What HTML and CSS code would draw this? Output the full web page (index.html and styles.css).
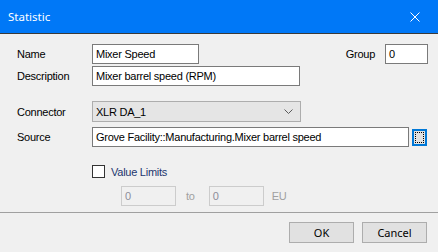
FILE: index.html
```html
<!DOCTYPE html>
<html>
<head>
<meta charset="utf-8">
<link rel="stylesheet" href="styles.css">
</head>
<body>
<div class="dialog">
  <div class="titlebar">
    <span class="title">Statistic</span>
    <svg class="close" width="10" height="10" viewBox="0 0 10 10"><path d="M0.5 0.5 L9.5 9.5 M9.5 0.5 L0.5 9.5" stroke="#fff" stroke-width="1" fill="none"/></svg>
  </div>
  <div class="content">
    <div class="row row-name">
      <span class="lbl">Name</span>
      <div class="field w-name">Mixer Speed</div>
      <span class="spacer"></span>
      <span class="lbl-group">Group</span>
      <div class="field w-group">0</div>
    </div>
    <div class="row row-desc">
      <span class="lbl">Description</span>
      <div class="field w-desc">Mixer barrel speed (RPM)</div>
    </div>
    <div class="row row-conn">
      <span class="lbl">Connector</span>
      <div class="select">
        <span>XLR DA_1</span>
        <svg class="chev" width="9" height="5" viewBox="0 0 9 5"><path d="M0.5 0.5 L4.5 4.5 L8.5 0.5" stroke="#5a5a5a" stroke-width="1" fill="none"/></svg>
      </div>
    </div>
    <div class="row row-src">
      <span class="lbl">Source</span>
      <div class="field w-src">Grove Facility::Manufacturing.Mixer barrel speed</div>
      <div class="browse"><span class="focus"></span></div>
    </div>
    <div class="row row-check">
      <span class="check"></span>
      <span class="check-lbl">Value Limits</span>
    </div>
    <div class="row row-limits">
      <div class="field disabled w-lim">0</div>
      <span class="dis-text to">to</span>
      <div class="field disabled w-lim">0</div>
      <span class="dis-text eu">EU</span>
    </div>
  </div>
  <div class="sep"></div>
  <div class="buttons">
    <div class="btn">OK</div>
    <div class="btn">Cancel</div>
  </div>
</div>
</body>
</html>
```
FILE: styles.css
```css
* { box-sizing: border-box; }
html, body {
  margin: 0;
  padding: 0;
  background: #f0f0f0;
}
.dialog {
  width: 438px;
  height: 252px;
  background: #f0f0f0;
  font-family: "Liberation Sans", Arial, sans-serif;
  font-size: 11px;
  letter-spacing: -0.25px;
  color: #000;
  overflow: hidden;
}
.titlebar {
  height: 34px;
  background: #0078f7;
  border-bottom: 1px solid #3a3a3a;
  display: flex;
  align-items: center;
  padding-left: 8px;
  padding-right: 18px;
}
.title {
  font-family: "Noto Sans", sans-serif;
  font-size: 11.5px;
  letter-spacing: 0;
  color: #fff;
  flex: 1;
  margin-top: -1px;
}
.close { display: block; margin-top: 1px; }
.content {
  padding-left: 17px;
}
.row {
  display: flex;
  align-items: center;
}
.lbl {
  width: 75px;
  flex: none;
}
.field {
  height: 20px;
  border: 1px solid #7a7a7a;
  background: #fff;
  padding-left: 3px;
  line-height: 18px;
  white-space: nowrap;
  overflow: hidden;
  flex: none;
}
.row-name { margin-top: 10px; }
.w-name { width: 107px; }
.spacer { flex: 1; }
.lbl-group { margin-right: 10px; }
.w-group { width: 43px; margin-right: 10px; }
.row-desc { margin-top: 2px; }
.w-desc { width: 208px; }
.row-conn { margin-top: 15px; }
.select {
  width: 209px;
  height: 21px;
  border: 1px solid #adadad;
  background: #e5e5e5;
  display: flex;
  align-items: center;
  padding-left: 3px;
  padding-right: 7px;
}
.select span { flex: 1; }
.chev { display: block; }
.row-src { margin-top: 5px; }
.w-src { width: 317px; }
.browse {
  width: 15px;
  height: 17px;
  margin-left: 3px;
  border: 2px solid #0078d7;
  background: #e1e1e1;
  padding: 1px;
}
.focus {
  display: block;
  width: 100%;
  height: 100%;
  border: 1px dotted #000;
}
.row-check {
  margin-top: 18px;
  padding-left: 75px;
  height: 13px;
}
.check {
  width: 13px;
  height: 13px;
  border: 1px solid #333;
  background: #fff;
  flex: none;
}
.check-lbl {
  margin-left: 6px;
  color: #22366e;
}
.row-limits {
  margin-top: 8px;
  padding-left: 104px;
}
.w-lim { width: 55px; }
.disabled {
  border-color: #cccccc;
  background: #f0f0f0;
  color: #8d8d9a;
}
.dis-text { color: #a0a0a0; }
.to { margin-left: 10px; margin-right: 14px; }
.eu { margin-left: 8px; }
.sep {
  margin-top: 6px;
  height: 1px;
  background: #a0a0a0;
}
.buttons {
  display: flex;
  justify-content: flex-end;
  gap: 8px;
  padding-top: 9px;
  padding-right: 11px;
}
.btn {
  width: 65px;
  height: 21px;
  border: 1px solid #adadad;
  background: #e1e1e1;
  font-family: "Noto Sans", sans-serif;
  font-size: 11px;
  letter-spacing: 0;
  display: flex;
  align-items: center;
  justify-content: center;
}
```
